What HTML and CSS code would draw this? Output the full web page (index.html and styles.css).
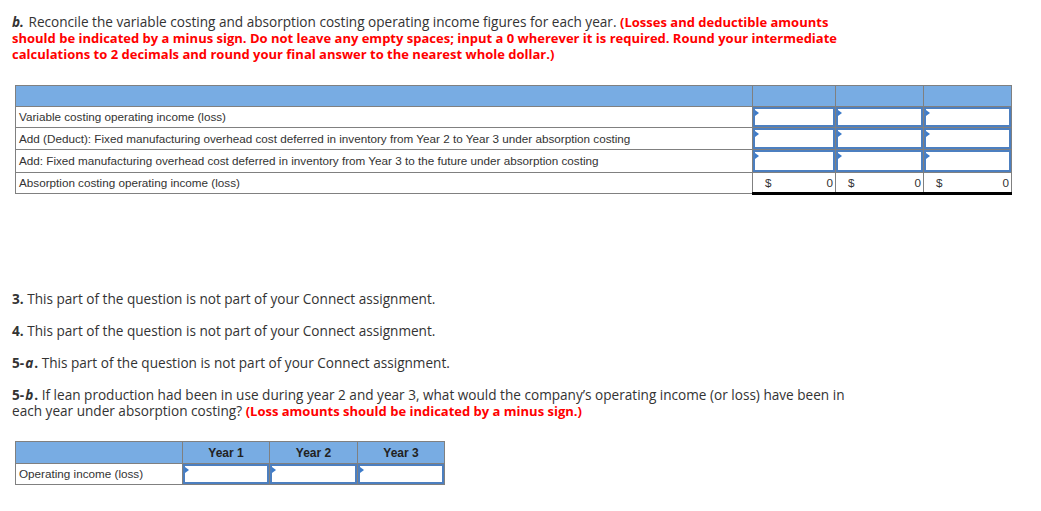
FILE: index.html
```html
<!DOCTYPE html>
<html>
<head>
<meta charset="utf-8">
<link rel="stylesheet" href="styles.css">
</head>
<body>
<div class="page">
  <p class="prompt"><b class="lbl">b.</b> Reconcile the variable costing and absorption costing operating income figures for each year. <strong class="red">(Losses and deductible amounts should be indicated by a minus sign. Do not leave any empty spaces; input a 0 wherever it is required. Round your intermediate calculations to 2 decimals and round your final answer to the nearest whole dollar.)</strong></p>

  <table class="grid recon">
    <colgroup><col class="c-label"><col class="c-83"><col class="c-88"><col class="c-88"></colgroup>
    <thead>
      <tr class="hdr"><th></th><th></th><th></th><th></th></tr>
    </thead>
    <tbody>
      <tr class="r21">
        <td class="label">Variable costing operating income (loss)</td>
        <td class="inp"><div class="box"><span class="tri"></span></div></td>
        <td class="inp"><div class="box"><span class="tri"></span></div></td>
        <td class="inp"><div class="box"><span class="tri"></span></div></td>
      </tr>
      <tr class="r22">
        <td class="label">Add (Deduct): Fixed manufacturing overhead cost deferred in inventory from Year 2 to Year 3 under absorption costing</td>
        <td class="inp"><div class="box"><span class="tri"></span></div></td>
        <td class="inp"><div class="box"><span class="tri"></span></div></td>
        <td class="inp"><div class="box"><span class="tri"></span></div></td>
      </tr>
      <tr class="r23">
        <td class="label">Add: Fixed manufacturing overhead cost deferred in inventory from Year 3 to the future under absorption costing</td>
        <td class="inp"><div class="box"><span class="tri"></span></div></td>
        <td class="inp"><div class="box"><span class="tri"></span></div></td>
        <td class="inp"><div class="box"><span class="tri"></span></div></td>
      </tr>
      <tr class="r21">
        <td class="label">Absorption costing operating income (loss)</td>
        <td class="total"><div class="amt"><span>$</span><span>0</span></div></td>
        <td class="total"><div class="amt"><span>$</span><span>0</span></div></td>
        <td class="total"><div class="amt"><span>$</span><span>0</span></div></td>
      </tr>
    </tbody>
  </table>

  <div class="parts">
    <p><b>3.</b> This part of the question is not part of your Connect assignment.</p>
    <p><b>4.</b> This part of the question is not part of your Connect assignment.</p>
    <p><b>5-<i class="it">a</i>.</b> This part of the question is not part of your Connect assignment.</p>
    <p><b>5-<i class="it">b</i>.</b> If lean production had been in use during year 2 and year 3, what would the company’s operating income (or loss) have been in each year under absorption costing? <strong class="red">(Loss amounts should be indicated by a minus sign.)</strong></p>
  </div>

  <table class="grid lean">
    <colgroup><col class="c-167"><col class="c-87"><col class="c-88"><col class="c-87"></colgroup>
    <thead>
      <tr class="hdr2"><th></th><th>Year 1</th><th>Year 2</th><th>Year 3</th></tr>
    </thead>
    <tbody>
      <tr class="r20">
        <td class="label">Operating income (loss)</td>
        <td class="inp"><div class="box"><span class="tri"></span></div></td>
        <td class="inp"><div class="box"><span class="tri"></span></div></td>
        <td class="inp"><div class="box"><span class="tri"></span></div></td>
      </tr>
    </tbody>
  </table>
</div>
</body>
</html>
```

FILE: styles.css
```css
html, body {
  margin: 0;
  padding: 0;
  background: #fff;
}
.page {
  padding: 14px 0 0 12px;
  font-family: "Open Sans", Lato, sans-serif;
  font-size: 13.6px;
  line-height: 16px;
  color: #333;
}
p {
  margin: 0;
}
.prompt {
  width: 832px;
}
.red {
  color: #f00;
  font-weight: 700;
  font-size: 13px;
}
.lbl {
  font-weight: 700;
  font-style: italic;
  padding-right: 1px;
}
.it {
  padding-left: 1px;
  padding-right: 1px;
}
.parts p b {
  font-weight: 700;
}
.grid {
  border-collapse: collapse;
  table-layout: fixed;
  font-family: "Liberation Sans", Arial, sans-serif;
  font-size: 11.7px;
  color: #333;
}
.recon {
  margin: 23px 0 0 3px;
  width: 997px;
}
.c-label { width: 737px; }
.c-83 { width: 83px; }
.c-88 { width: 88px; }
.c-87 { width: 87px; }
.c-167 { width: 167px; }
.grid th, .grid td {
  border: 1px solid #808080;
  padding: 0;
}
.grid th {
  background: #78ace3;
  font-weight: 700;
  color: #222;
  font-size: 12px;
}
.hdr { height: 21px; }
.hdr2 { height: 22px; }
.r20 { height: 20px; }
.r21 { height: 21px; }
.r22 { height: 22px; }
.r23 { height: 23px; }
.label {
  padding: 0 0 0 3px !important;
  white-space: nowrap;
  vertical-align: middle;
}
.inp {
  padding: 0 !important;
  height: 1px;
}
.box {
  position: relative;
  box-sizing: border-box;
  height: 100%;
  min-height: 20px;
  border: 2px solid #4c7fc0;
  background: #fff;
}
.tri {
  position: absolute;
  left: 0;
  top: 1px;
  width: 0;
  height: 0;
  border-top: 3px solid transparent;
  border-bottom: 3px solid transparent;
  border-left: 4px solid #3d7bc9;
}
.total {
  border-bottom: 3px solid #000 !important;
}
.amt {
  display: flex;
  justify-content: space-between;
  padding: 0 2px 0 12px;
}
.parts {
  margin-top: 96px;
  display: flex;
  flex-direction: column;
  gap: 16px;
  width: 848px;
}
.lean {
  margin: 22px 0 0 3px;
  width: 430px;
}
.lean th {
  text-align: center;
}
```
